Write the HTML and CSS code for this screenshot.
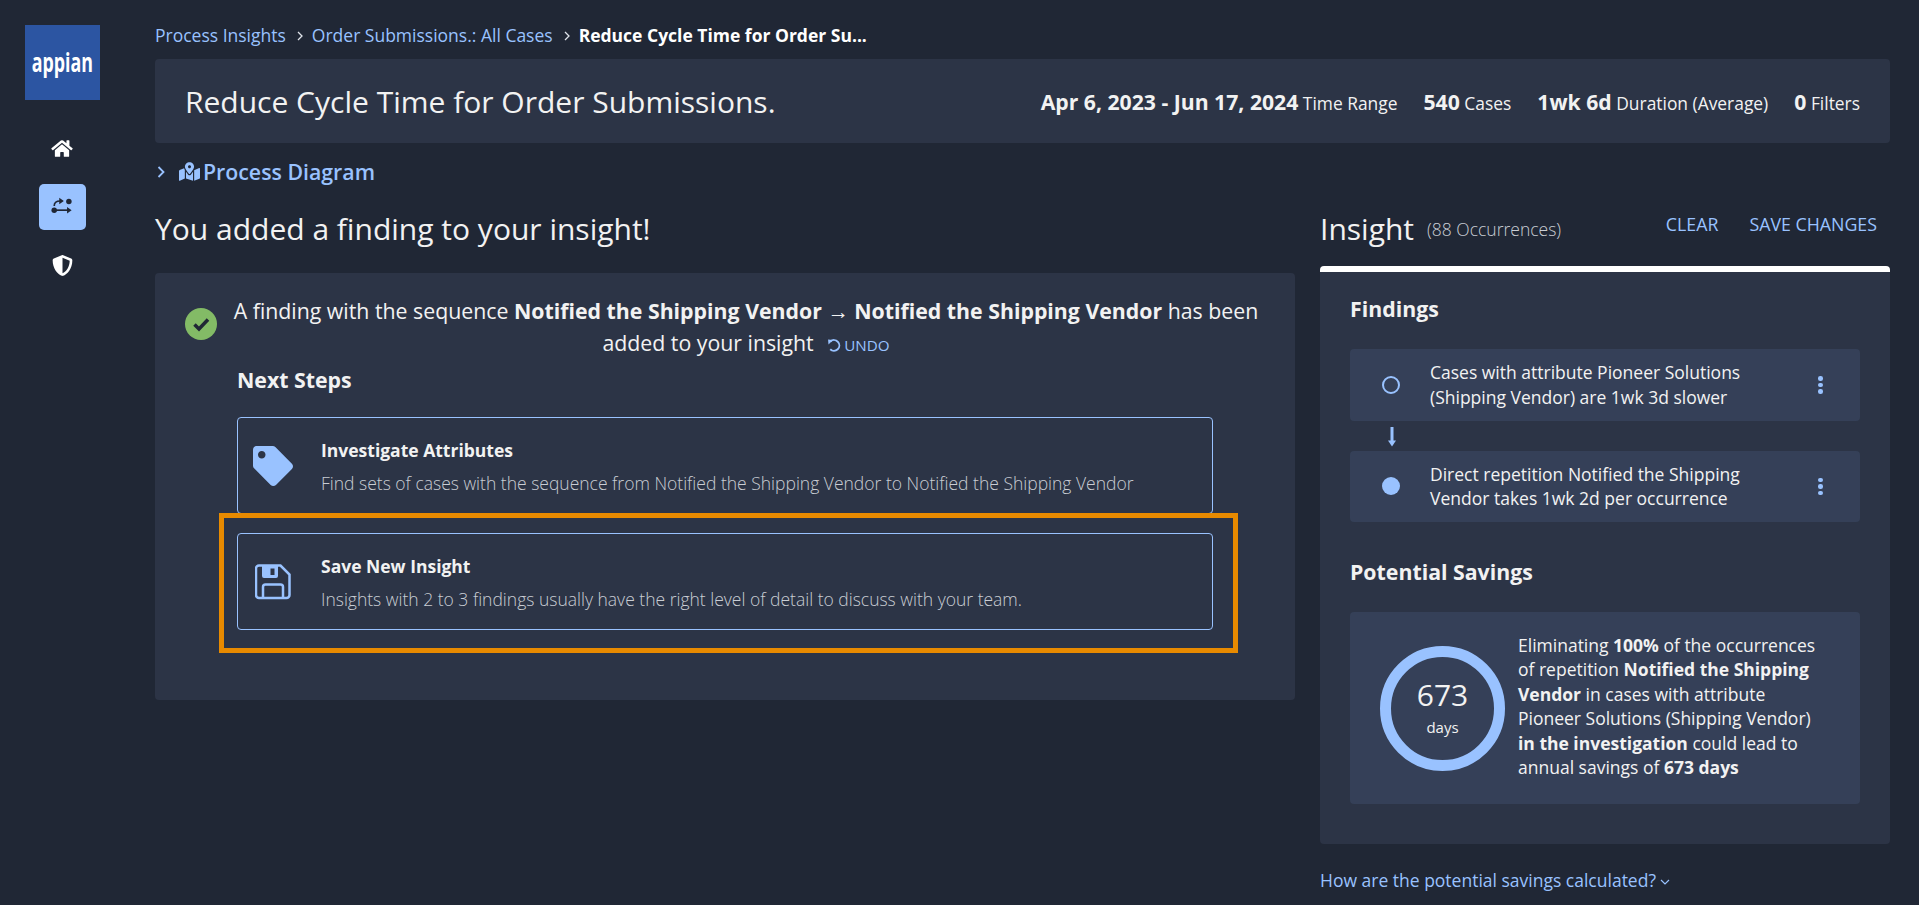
FILE: index.html
```html
<!DOCTYPE html>
<html>
<head>
  <title>Reduce Cycle Time for Order Submissions.</title>
  <meta name="viewport" content="width=device-width, initial-scale=1.0">
  <link rel="stylesheet" href="styles.css">
</head>
<body>
  <nav class="sidebar">
    <div class="logo"><span>appian</span></div>
    <a class="nav-item">
      <svg class="nav-home" viewBox="0 0 576 512"><path d="M280.37 148.26L96 300.11V464a16 16 0 0 0 16 16l112.06-.29a16 16 0 0 0 15.92-16V368a16 16 0 0 1 16-16h64a16 16 0 0 1 16 16v95.64a16 16 0 0 0 16 16.05L464 480a16 16 0 0 0 16-16V300L295.67 148.26a12.19 12.19 0 0 0-15.3 0zM571.6 251.47L488 182.56V44.05a12 12 0 0 0-12-12h-56a12 12 0 0 0-12 12v72.61L318.47 43a48 48 0 0 0-61 0L4.34 251.47a12 12 0 0 0-1.6 16.9l25.5 31A12 12 0 0 0 45.15 301l235.22-193.74a12.19 12.19 0 0 1 15.3 0L530.9 301a12 12 0 0 0 16.9-1.6l25.5-31a12 12 0 0 0-1.7-16.93z"/></svg>
    </a>
    <a class="nav-item active">
      <svg class="nav-route" viewBox="0 0 24 20">
        <circle cx="19.5" cy="4.5" r="3"/>
        <circle cx="3.5" cy="14" r="3"/>
        <path class="line" d="M3.5 9.500C3.500 5.500 6 4 10 4"/>
        <path d="M9 0.5l5 3.5-5 3.5z"/>
        <path class="line" d="M6 14h13"/>
        <path d="M17.5 10.5l5 3.5-5 3.5z"/>
      </svg>
    </a>
    <a class="nav-item">
      <svg class="nav-shield" viewBox="0 0 512 512"><path d="M466.5 83.7l-192-80a48.15 48.15 0 0 0-36.9 0l-192 80C27.7 91.1 16 108.6 16 128c0 198.5 114.5 335.7 221.5 380.3 11.8 4.9 25.1 4.9 36.9 0C360.1 472.6 496 349.3 496 128c0-19.4-11.7-36.9-29.5-44.3zM256.1 446.3l-.1-381 175.9 73.3c-3.3 151.4-82.1 261.1-175.8 307.7z"/></svg>
    </a>
  </nav>

  <main class="page">
    <div class="breadcrumbs">
      <a>Process Insights</a>
      <svg class="crumb-sep" viewBox="0 0 8 12"><path d="M2 2l4 4-4 4"/></svg>
      <a>Order Submissions.: All Cases</a>
      <svg class="crumb-sep" viewBox="0 0 8 12"><path d="M2 2l4 4-4 4"/></svg>
      <strong>Reduce Cycle Time for Order Su...</strong>
    </div>

    <header class="title-bar">
      <h1>Reduce Cycle Time for Order Submissions.</h1>
      <div class="stats">
        <span><b>Apr 6, 2023 - Jun 17, 2024</b> Time Range</span>
        <span><b>540</b> Cases</span>
        <span><b>1wk 6d</b> Duration (Average)</span>
        <span><b>0</b> Filters</span>
      </div>
    </header>

    <div class="diagram-toggle">
      <svg class="toggle-chevron" viewBox="0 0 10 14"><path d="M2.5 2l5 5-5 5"/></svg>
      <svg class="toggle-map" viewBox="0 0 576 512"><path d="M288 0c-69.59 0-126 56.41-126 126 0 56.26 82.35 158.8 113.9 196.02 6.39 7.54 17.82 7.54 24.2 0C331.65 284.8 414 182.26 414 126 414 56.41 357.59 0 288 0zm0 168c-23.2 0-42-18.8-42-42s18.8-42 42-42 42 18.8 42 42-18.8 42-42 42zM20.12 215.95A32.006 32.006 0 0 0 0 245.66v250.32c0 11.32 11.43 19.06 21.94 14.86L160 448V214.92c-8.84-15.98-16.07-31.54-21.25-46.42L20.12 215.95zM288 359.67c-14.07 0-27.38-6.18-36.51-16.96-19.66-23.2-40.57-49.62-59.49-76.72v182l192 64V266c-18.92 27.09-39.82 53.52-59.49 76.72-9.13 10.77-22.44 16.95-36.51 16.95zm266.06-198.51L416 224v288l139.88-55.95A31.996 31.996 0 0 0 576 426.34V176.02c0-11.32-11.43-19.06-21.94-14.86z"/></svg>
      <span>Process Diagram</span>
    </div>

    <div class="columns">
      <section class="left">
        <h2 class="section-title">You added a finding to your insight!</h2>
        <div class="card result">
          <div class="notice">
            <svg class="check" viewBox="0 0 32 32">
              <circle cx="16" cy="16" r="16"/>
              <path d="M9.5 16.5l4.5 4.5 9-9.5"/>
            </svg>
            <p>A finding with the sequence <b>Notified the Shipping Vendor &#8594; Notified the Shipping Vendor</b> has been added to your insight <a class="undo"><svg viewBox="0 0 14 14"><path d="M3.2 3.2A5 5 0 1 1 3 10.5"/><path class="fill" d="M1 1.4l4.6 .4-4.2 4.2z"/></svg>UNDO</a></p>
          </div>
          <h3 class="next-title">Next Steps</h3>
          <div class="steps">
            <div class="step">
              <svg class="step-icon tag" viewBox="0 0 512 512"><path d="M0 252.118V48C0 21.49 21.49 0 48 0h204.118a48 48 0 0 1 33.941 14.059l211.882 211.882c18.745 18.745 18.745 49.137 0 67.882L293.823 497.941c-18.745 18.745-49.137 18.745-67.882 0L14.059 286.059A48 48 0 0 1 0 252.118zM112 64c-26.51 0-48 21.49-48 48s21.49 48 48 48 48-21.49 48-48-21.49-48-48-48z"/></svg>
              <div>
                <div class="step-title">Investigate Attributes</div>
                <div class="step-text">Find sets of cases with the sequence from Notified the Shipping Vendor to Notified the Shipping Vendor</div>
              </div>
            </div>
            <div class="step">
              <svg class="step-icon save" viewBox="0 0 36 36">
                <path class="save-outline" d="M4 1.5h21.5l9 9V31a3 3 0 0 1-3 3H4a3 3 0 0 1-3-3V4.5a3 3 0 0 1 3-3z"/>
                <path d="M7 2h16v10a2 2 0 0 1-2 2H9a2 2 0 0 1-2-2zM15.500 4.500v6.500h4V4.500z" fill-rule="evenodd"/>
                <path class="save-outline" d="M8 33v-10a2.500 2.500 0 0 1 2.500-2.500h15a2.500 2.500 0 0 1 2.500 2.500v10"/>
              </svg>
              <div class="step-body">
                <div class="step-title">Save New Insight</div>
                <div class="step-text">Insights with 2 to 3 findings usually have the right level of detail to discuss with your team.</div>
              </div>
            </div>
            <div class="highlight"></div>
          </div>
        </div>
      </section>

      <aside class="right">
        <div class="insight-head">
          <h2 class="section-title">Insight</h2>
          <span class="occurrences">(88 Occurrences)</span>
          <div class="actions"><a>CLEAR</a><a>SAVE CHANGES</a></div>
        </div>
        <div class="card insight">
          <h3>Findings</h3>
          <div class="finding first">
            <span class="dot hollow"></span>
            <p>Cases with attribute Pioneer Solutions (Shipping Vendor) are 1wk 3d slower</p>
            <span class="kebab"><i></i><i></i><i></i></span>
          </div>
          <svg class="down-arrow" viewBox="0 0 10 20"><path class="shaft" d="M5 0v15"/><path d="M1 13.500h8L5 19.500z"/></svg>
          <div class="finding">
            <span class="dot"></span>
            <p>Direct repetition Notified the Shipping Vendor takes 1wk 2d per occurrence</p>
            <span class="kebab"><i></i><i></i><i></i></span>
          </div>
          <h3 class="savings-title">Potential Savings</h3>
          <div class="savings">
            <div class="ring">
              <span class="ring-num">673</span>
              <span class="ring-unit">days</span>
            </div>
            <p>Eliminating <b>100%</b> of the occurrences of repetition <b>Notified the Shipping Vendor</b> in cases with attribute Pioneer Solutions (Shipping Vendor) <b>in the investigation</b> could lead to annual savings of <b>673 days</b></p>
          </div>
        </div>
        <a class="how-link">How are the potential savings calculated?<svg viewBox="0 0 10 6"><path d="M1 1l4 4 4-4"/></svg></a>
      </aside>
    </div>
  </main>
</body>
</html>
```

FILE: styles.css
```css
* {
  box-sizing: border-box;
}
html, body {
  height: 100%;
}
body {
  margin: 0;
  display: flex;
  background: #202735;
  color: #f2f2f2;
  font-family: "Open Sans", "Noto Sans", sans-serif;
  overflow: hidden;
}
h1, h2, h3, p {
  margin: 0;
}

/* sidebar */
.sidebar {
  width: 124px;
  flex-shrink: 0;
  display: flex;
  flex-direction: column;
  align-items: center;
  padding-top: 25px;
}
.logo {
  width: 75px;
  height: 75px;
  background: #2c55a2;
  color: white;
  display: flex;
  align-items: center;
  justify-content: center;
  margin-bottom: 25px;
}
.logo span {
  font-size: 27px;
  font-weight: 700;
  transform: scaleX(0.66);
  line-height: 1;
  margin-top: -3px;
}
.nav-item {
  width: 47px;
  height: 46px;
  border-radius: 5px;
  display: flex;
  align-items: center;
  justify-content: center;
  margin-bottom: 12.500px;
}
.nav-item svg {
  fill: white;
}
.nav-item.active {
  background: #99c2ff;
}
.nav-home {
  width: 22px;
  height: 19px;
}
.nav-shield {
  width: 21px;
  height: 21px;
}
.nav-route {
  width: 22px;
  height: 19px;
}
.nav-item .nav-route {
  fill: #202735;
}
.nav-route .line {
  fill: none;
  stroke: #202735;
  stroke-width: 1.8;
}

/* main area */
.page {
  flex: 1;
  min-width: 0;
  padding: 0 29px 0 31px;
}
.breadcrumbs {
  height: 59px;
  display: flex;
  align-items: center;
  font-size: 17.500px;
  color: #99c2ff;
  padding-top: 10px;
}
.breadcrumbs strong {
  color: white;
  font-weight: 700;
}
.crumb-sep {
  width: 8px;
  height: 12px;
  margin: 2px 8px 0 10px;
  fill: none;
  stroke: #dfe3ea;
  stroke-width: 1.3;
}
.title-bar {
  height: 84px;
  background: #2c3446;
  border-radius: 4px;
  display: flex;
  align-items: center;
  justify-content: space-between;
  padding: 0 30px;
}
.title-bar h1 {
  font-size: 30px;
  font-weight: 400;
}
.stats {
  display: flex;
  gap: 26px;
  font-size: 17.400px;
}
.stats b {
  font-size: 21.200px;
  font-weight: 700;
}
.diagram-toggle {
  height: 57px;
  display: flex;
  align-items: center;
  color: #99c2ff;
  font-size: 21.300px;
  font-weight: 600;
}
.toggle-chevron {
  width: 10px;
  height: 14px;
  margin: 0 13px 0 1px;
  fill: none;
  stroke: #99c2ff;
  stroke-width: 1.800;
}
.toggle-map {
  width: 21px;
  height: 19px;
  fill: #99c2ff;
  margin-right: 3px;
}
.columns {
  display: grid;
  grid-template-columns: 1140px 570px;
  gap: 25px;
  margin-top: 10px;
}
.section-title {
  font-size: 30px;
  font-weight: 400;
  line-height: 38px;
}
.left .section-title {
  margin-bottom: 25px;
}
.card {
  background: #2c3446;
  border-radius: 4px;
}
.result {
  height: 427px;
  padding: 22px 30px 0 30px;
}

/* finding notice */
.notice {
  display: flex;
  align-items: flex-start;
  gap: 10px;
}
.check {
  width: 32px;
  height: 32px;
  flex-shrink: 0;
  margin-top: 13px;
}
.check circle {
  fill: #83bb66;
}
.check path {
  fill: none;
  stroke: #202735;
  stroke-width: 3.500;
}
.notice p {
  font-size: 21.300px;
  line-height: 32px;
  text-align: center;
  flex: 1;
}
.notice b {
  font-weight: 700;
}
.undo {
  font-size: 15.200px;
  color: #99c2ff;
  margin-left: 8px;
}
.undo svg {
  width: 15px;
  height: 15px;
  vertical-align: -2px;
  margin-right: 2px;
  fill: none;
  stroke: #99c2ff;
  stroke-width: 1.800;
}
.undo .fill {
  fill: #99c2ff;
  stroke: none;
}
.next-title {
  font-size: 21.300px;
  font-weight: 700;
  margin: 4px 0 0 52px;
  line-height: 30px;
}

/* next step boxes */
.steps {
  position: relative;
  margin: 22px 52px 0;
  display: flex;
  flex-direction: column;
  gap: 19px;
}
.step {
  height: 97px;
  border: 1px solid #99c2ff;
  border-radius: 4px;
  display: flex;
  align-items: center;
  padding: 2px 0 0 15px;
}
.step-icon {
  width: 40px;
  height: 40px;
  margin: -2px 28px 0 0;
  fill: #99c2ff;
  flex-shrink: 0;
}
.step-icon.save {
  width: 36px;
  height: 36px;
  margin: -2px 30px 0 2px;
}
.save-outline {
  fill: none;
  stroke: #99c2ff;
  stroke-width: 2.500;
}
.step-title {
  font-size: 17.500px;
  font-weight: 700;
  margin-bottom: 10px;
  line-height: 23px;
}
.step-text {
  font-size: 17.500px;
  font-weight: 300;
  color: #c9cdd4;
  line-height: 23px;
}
.highlight {
  position: absolute;
  left: -18px;
  right: -25px;
  bottom: -23px;
  height: 140px;
  border: 5px solid #e88a00;
  pointer-events: none;
}

/* insight column */
.insight-head {
  display: flex;
  align-items: center;
  height: 38px;
  margin-bottom: 18px;
}
.occurrences {
  font-size: 17.500px;
  font-weight: 300;
  color: #c9cdd4;
  margin: 0 0 0 13px;
}
.actions {
  margin-left: auto;
  display: flex;
  gap: 31px;
  font-size: 17.800px;
  color: #99c2ff;
  padding-right: 13px;
  margin-top: -10px;
}
.insight {
  height: 578px;
  border-top: 6px solid white;
  padding: 23px 30px 0;
}
.insight h3 {
  font-size: 21.300px;
  font-weight: 700;
  line-height: 28px;
}
.finding {
  height: 71.500px;
  background: #354058;
  border-radius: 4px;
  display: flex;
  align-items: center;
  padding: 0 0 0 32px;
  margin-top: 24px;
}
.finding.first {
  margin-top: 26px;
}
.finding p {
  width: 330px;
  margin-left: 30px;
  font-size: 17.500px;
  line-height: 24.500px;
}
.dot {
  width: 18px;
  height: 18px;
  border-radius: 50%;
  background: #99c2ff;
  flex-shrink: 0;
}
.dot.hollow {
  background: none;
  border: 2px solid #99c2ff;
}
.kebab {
  display: flex;
  flex-direction: column;
  gap: 2px;
  margin-left: 58px;
}
.kebab i {
  width: 4.500px;
  height: 4.500px;
  border-radius: 50%;
  background: #99c2ff;
}
.down-arrow {
  display: block;
  width: 10px;
  height: 20px;
  margin: 6px 0 -20px 37px;
  fill: #99c2ff;
}
.down-arrow .shaft {
  stroke: #99c2ff;
  stroke-width: 3;
}
.insight h3.savings-title {
  margin-top: 36px;
}
.savings {
  height: 192px;
  margin-top: 26px;
  background: #354058;
  border-radius: 4px;
  display: flex;
  align-items: center;
  padding-left: 30px;
}
.ring {
  width: 125px;
  height: 125px;
  border: 11px solid #99c2ff;
  border-radius: 50%;
  flex-shrink: 0;
  display: flex;
  flex-direction: column;
  align-items: center;
  justify-content: center;
  margin-right: 13px;
}
.ring-num {
  font-size: 30px;
  line-height: 38px;
}
.ring-unit {
  font-size: 15px;
  font-weight: 400;
  line-height: 26px;
}
.savings p {
  width: 305px;
  font-size: 17.500px;
  line-height: 24.500px;
  margin-top: -4px;
}
.how-link {
  display: block;
  margin-top: 24px;
  font-size: 17.500px;
  color: #99c2ff;
}
.how-link svg {
  width: 10px;
  height: 6px;
  margin-left: 4px;
  vertical-align: 2px;
  fill: none;
  stroke: #99c2ff;
  stroke-width: 1.200;
}
```
